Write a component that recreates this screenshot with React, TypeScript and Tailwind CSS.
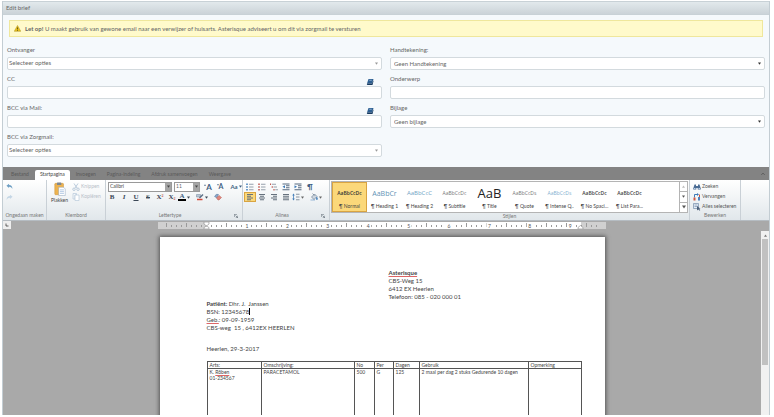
import React from 'react';
import { useState } from 'react';

type IconProps = {
  children: React.ReactNode;
  className?: string;
};

// Shared wrapper for the small toolbar drawings
const Icon = ({ children, className = 'size-2 shrink-0' }: IconProps) => (
  <svg viewBox="0 0 16 16" className={className} fill="none" aria-hidden="true">
    {children}
  </svg>
);

const Caret = ({ className = 'w-1 h-1' }: { className?: string }) => (
  <svg viewBox="0 0 8 8" className={className} aria-hidden="true">
    <path d="M0 1h8L4 7z" fill="currentColor" />
  </svg>
);

const BookIcon = () => (
  <Icon className="size-2">
    <path d="M5 2h10l-3 9H2z" fill="#2d5f92" />
    <path d="M2 11h10l2-6 1 1-2 8H3q-2-1-1-3z" fill="#16395f" />
    <path d="M6.500 4.500h5" stroke="#a9c6e2" strokeWidth="1.500" />
  </Icon>
);

const WarningIcon = () => (
  <Icon className="size-[7px]">
    <path d="M8 1l7.500 13.500H.5z" fill="#e9c21d" stroke="#a88a1c" />
    <path d="M8 5.500v4.500M8 11.500v1.800" stroke="#4a3f10" strokeWidth="1.800" />
  </Icon>
);

const UndoIcon = ({ className }: { className: string }) => (
  <svg viewBox="0 0 16 16" className={className} fill="none" aria-hidden="true">
    <path d="M1 6l6-4.500v3c5 0 8 3 7.500 9-1.500-3.500-4-5-7.500-5v3z" fill="currentColor" />
  </svg>
);

const PasteIcon = () => (
  <svg viewBox="0 0 26 32" className="h-[14px] w-3" aria-hidden="true">
    <rect x="1" y="3" width="20" height="26" rx="2" fill="#edb350" stroke="#c68a2b" />
    <rect x="6" y="1" width="10" height="6" rx="1" fill="#7c8794" />
    <path d="M10 12h11l4 4v15H10z" fill="#fff" stroke="#7f97b5" />
    <path d="M13 18h9M13 22h9M13 26h9" stroke="#8fb0d6" strokeWidth="1.500" />
  </svg>
);

const CutIcon = () => (
  <Icon>
    <path d="M4 1l6 9M12 1L6 10" stroke="#b3c6d8" strokeWidth="1.800" />
    <circle cx="4" cy="12.500" r="2.500" stroke="#b3c6d8" strokeWidth="1.800" />
    <circle cx="12" cy="12.500" r="2.500" stroke="#b3c6d8" strokeWidth="1.800" />
  </Icon>
);

const CopyIcon = () => (
  <Icon>
    <path d="M2 1h7v3H6v8H2z" fill="#f3f7fa" stroke="#b3c6d8" strokeWidth="1.300" />
    <path d="M6 4h8v11H6z" fill="#fff" stroke="#b3c6d8" strokeWidth="1.300" />
  </Icon>
);

const BulletsIcon = ({ color }: { color: string }) => (
  <Icon>
    <path d="M2 1v3M2 6.500v3M2 12v3" stroke={color} strokeWidth="3" />
    <path d="M6 2.500h9M6 8h9M6 13.500h9" stroke="#7d8a98" strokeWidth="1.600" />
  </Icon>
);

const MultiListIcon = () => (
  <Icon>
    <path d="M1 1v3M4.500 6.500v3M8 12v3" stroke="#c0574f" strokeWidth="2.400" />
    <path d="M4 2.500h8M7 8h7M10.500 13.500H16" stroke="#7d8a98" strokeWidth="1.600" />
  </Icon>
);

const IndentIcon = ({ flip }: { flip?: boolean }) => (
  <Icon>
    <path d="M1 2h14M8 5.500h7M8 9.500h7M1 13.500h14" stroke="#566a80" strokeWidth="2.200" />
    <path d={flip ? 'M1 4.500v6L6 7.500z' : 'M6 4.500v6L1 7.500z'} fill="#3d7ab8" />
  </Icon>
);

const AlignIcon = ({ d }: { d: string }) => (
  <Icon>
    <path d={d} stroke="#66717d" strokeWidth="2" />
  </Icon>
);

const SpacingIcon = () => (
  <Icon>
    <path d="M3 1L.5 5h5zM3 15L.5 11h5z" fill="#3d7ab8" />
    <path d="M3 4v8" stroke="#3d7ab8" strokeWidth="1.500" />
    <path d="M8 2.500h7M8 8h7M8 13.500h7" stroke="#7d8a98" strokeWidth="1.800" />
  </Icon>
);

const BucketIcon = () => (
  <Icon>
    <path d="M3 8l6-6 5 5-6 6z" fill="#cfd8e1" stroke="#61758b" strokeWidth="1.300" />
    <path d="M5 1l4 4" stroke="#61758b" strokeWidth="1.300" />
    <path d="M13.500 8q3 5 .5 5.500T13.500 8zM1 14h9" fill="#3d7ab8" stroke="#3d7ab8" />
  </Icon>
);

const MarkerIcon = () => (
  <Icon>
    <path d="M1 3h8v5H1z" fill="#b9c6d4" stroke="#71859b" />
    <path d="M6 9l7-7 2 2-7 7z" fill="#5a6f86" />
    <path d="M2 13h11" stroke="#d44a3a" strokeWidth="3" />
  </Icon>
);

const EraserIcon = () => (
  <Icon>
    <path d="M1 7q4-7 8-4l-3 7z" fill="#8aa6c8" stroke="#5e7da3" />
    <path d="M5 10l5-5 5 4-5 5H8z" fill="#e2877c" stroke="#b65a50" />
  </Icon>
);

const BinocularsIcon = () => (
  <Icon>
    <path d="M3 3h3v3h4V3h3l2.500 8v2h-6v-3h-3v3h-6v-2z" fill="#4b6c94" />
    <path d="M2 11h3M11 11h3" stroke="#b9d0ea" strokeWidth="2" />
  </Icon>
);

const ReplaceIcon = () => (
  <Icon>
    <path d="M3 9V3h6" stroke="#3d7ab8" strokeWidth="2" />
    <path d="M8 0l4 3-4 3z" fill="#3d7ab8" />
    <path d="M1 9h4v6H1z" fill="#d2563f" />
    <path d="M10 8h4v7h-4z" fill="#4f81bd" />
    <path d="M13 3v5" stroke="#d2563f" strokeWidth="2" />
  </Icon>
);

const SelectAllIcon = () => (
  <Icon>
    <path d="M1 1h10v10H1z" fill="#e4ecf5" stroke="#6c86a5" strokeWidth="1.300" />
    <path d="M3 4h6M3 7h6" stroke="#6c86a5" strokeWidth="1.200" />
    <path d="M8 6v9l2.500-2 3 2.500 1-1.500-2.500-2.500h3z" fill="#4b5f78" />
  </Icon>
);

const LauncherIcon = () => (
  <Icon className="size-1">
    <path d="M1 12V1h11" stroke="#55606b" strokeWidth="2.500" />
    <path d="M6 6l8 8M15 7v8H7" stroke="#55606b" strokeWidth="2.500" />
  </Icon>
);

type SelectFieldProps = {
  id: string;
  label: string;
  options: string[];
  boxed?: boolean;
};

const SelectField = ({ id, label, options, boxed }: SelectFieldProps) => (
  <div>
    <label htmlFor={id} className="block h-[13px] leading-3">
      {label}
    </label>
    <div className="grid items-center rounded-xs border border-[#d3dade] bg-white">
      <select
        id={id}
        className={`col-start-1 row-start-1 h-[11px] w-full appearance-none outline-none ${
          boxed ? 'pl-[3px]' : 'px-px pb-[2px]'
        }`}
      >
        {options.map((option) => (
          <option key={option}>{option}</option>
        ))}
      </select>
      <span className={`pointer-events-none col-start-1 row-start-1 justify-self-end pr-[3px] ${boxed ? 'text-[#333]' : 'text-[#999]'}`}>
        <Caret className="size-[3px]" />
      </span>
    </div>
  </div>
);

const TextField = ({ id, label, book }: { id: string; label: string; book?: boolean }) => (
  <div>
    <div className="flex h-[13px] justify-between">
      <label htmlFor={id} className="leading-3">
        {label}
      </label>
      {book && (
        <button type="button" aria-label="Adresboek" className="mr-2 pt-1">
          <BookIcon />
        </button>
      )}
    </div>
    <input
      id={id}
      type="text"
      className="block h-[13px] w-full rounded-xs border border-[#d3dade] bg-white px-1 outline-none"
    />
  </div>
);

type GroupProps = {
  title: string;
  className: string;
  launcher?: boolean;
  children: React.ReactNode;
};

const Group = ({ title, className, launcher, children }: GroupProps) => (
  <section className={`flex flex-col border-r border-[#c9d0d6] ${className}`}>
    <div className="flex-1">{children}</div>
    <div className="flex h-2 items-center text-[#777]">
      <span className="flex-1 text-center">{title}</span>
      {launcher && (
        <button type="button" aria-label={`${title} opties`} className="pr-1">
          <LauncherIcon />
        </button>
      )}
    </div>
  </section>
);

const Tool = ({ label, active, children }: { label: string; active?: boolean; children: React.ReactNode }) => (
  <button
    type="button"
    aria-label={label}
    className={`flex h-[10px] w-3 items-center justify-center ${
      active ? 'border border-[#d9a441] bg-[#fbd87a]' : ''
    }`}
  >
    {children}
  </button>
);

const tabs = ['Bestand', 'Startpagina', 'Invoegen', 'Pagina-indeling', 'Afdruk samenvoegen', 'Weergave'];

const styles = [
  { name: 'Normal', sample: 'AaBbCcDc', look: 'text-[5px] font-semibold text-[#333]' },
  { name: 'Heading 1', sample: 'AaBbCr', look: 'text-[7px] text-[#5f93b5]' },
  { name: 'Heading 2', sample: 'AaBbCcC', look: 'text-[6px] text-[#6fa3c4]' },
  { name: 'Subtitle', sample: 'AaBbCcDc', look: 'text-[5px] text-[#777]' },
  { name: 'Title', sample: 'AaB', look: 'text-[13px] text-[#222]' },
  { name: 'Quote', sample: 'AaBbCcDs', look: 'text-[5px] text-[#777]' },
  { name: 'Intense Q..', sample: 'AaBbCcDs', look: 'text-[5px] text-[#7fb0d0]' },
  { name: 'No Spaci...', sample: 'AaBbCcDc', look: 'text-[5px] font-semibold text-[#444]' },
  { name: 'List Para...', sample: 'AaBbCcDc', look: 'text-[5px] font-semibold text-[#444]' },
];

// Ticks every 5px, a taller one halfway between two numbers
const Ruler = () => (
  <svg viewBox="0 0 448 7" className="h-[7px] w-[448px]" aria-hidden="true">
    <rect width="448" height="7" fill="#d0d0d0" />
    <rect x="48" width="375" height="7" fill="#fff" />
    {Array.from({ length: 87 }, (_, i) => (
      <path key={i} d={`M${8.5 + i * 5} ${i % 4 ? 3 : 1}v${i % 4 ? 2 : 4}`} stroke="#9a9a9a" />
    ))}
    {Array.from({ length: 9 }, (_, i) => (
      <g key={i}>
        <rect x={86 + i * 40.4} y="1" width="6" height="5" fill="#fff" />
        <text x={89 + i * 40.4} y="6" textAnchor="middle" fontSize="5" fill="#555">
          {i + 1}
        </text>
      </g>
    ))}
    <path d="M46 0h5v2l-2.500 2L46 2zM46 7V5.500L48.500 4 51 5.500V7zM420 7V5.500l2.500-2 2.500 2V7z" fill="#fff" stroke="#888" strokeWidth=".6" />
  </svg>
);

const columns = [
  { title: 'Arts:', width: 'w-[54px]' },
  { title: 'Omschrijving:', width: 'w-[93px]' },
  { title: 'No', width: 'w-5' },
  { title: 'Per', width: 'w-[19px]' },
  { title: 'Dagen', width: 'w-[26px]' },
  { title: 'Gebruik', width: 'w-[109px]' },
  { title: 'Opmerking', width: 'w-[53px]' },
];

const spelling = 'underline decoration-[#d66] decoration-1 underline-offset-1';

const Letter = () => (
  <article className="h-[620px] w-[445px] shrink-0 bg-white pt-8 pl-[47px] text-[6px] leading-2 text-[#444] shadow-[0_0_4px_1px_#555]">
    <address className="pl-[182px] not-italic">
      <b className={spelling}>Asterisque</b>
      <br />
      CBS-Weg 15
      <br />
      6412 EX Heerlen
      <br />
      Telefoon: 085 - 020 000 01
    </address>
    <p className="-mt-px">
      <b>Patiënt:</b> Dhr. J.&nbsp; Janssen
      <br />
      BSN: <span className="border-r border-black">12345678</span>
      <br />
      <span className={spelling}>Geb.</span>: 09-09-1959
      <br />
      CBS-weg&nbsp; 15 , 6412EX HEERLEN
    </p>
    <p className="pt-[13px]">Heerlen, 29-3-2017</p>
    <table className="mt-2 w-[374px] table-fixed border-collapse text-left text-[5px] leading-[6px]">
      <thead>
        <tr>
          {columns.map((column) => (
            <th key={column.title} className={`border border-[#555] pl-[2px] font-normal ${column.width}`}>
              {column.title}
            </th>
          ))}
        </tr>
      </thead>
      <tbody>
        <tr className="h-40 align-top">
          <td className="border border-[#555] pl-[2px]">
            K. <span className={spelling}>Rõben</span>
            <br />
            01-234567
          </td>
          <td className="border border-[#555] pl-[2px]">PARACETAMOL</td>
          <td className="border border-[#555] pl-[2px]">500</td>
          <td className="border border-[#555] pl-[2px]">G</td>
          <td className="border border-[#555] pl-[2px]">125</td>
          <td className="border border-[#555] pl-[2px]">2 maal per dag 2 stuks Gedurende 10 dagen</td>
          <td className="border border-[#555] pl-[2px]" />
        </tr>
      </tbody>
    </table>
  </article>
);

const App = () => {
  const [activeTab, setActiveTab] = useState('Startpagina');
  const [activeStyle, setActiveStyle] = useState('Normal');

  return (
    <div className="flex h-screen flex-col overflow-hidden bg-white pt-px pr-1 pb-[2px] pl-[2px] font-['Lato',sans-serif] text-[6px] text-[#666]">
      <main className="flex min-h-0 flex-1 flex-col border-x border-[#c3cdd3] bg-[#f5f9fc]">
        <h1 className="h-[14px] border-y border-[#c8d1d6] bg-linear-to-b from-[#e2e9ec] to-[#cbd3d8] pl-[3px] leading-3">
          Edit brief
        </h1>

        {/* Warning */}
        <div className="mx-[6px] mt-[5px] flex h-[17px] items-center gap-1 border border-[#efe79c] bg-[#fffacb] pl-1">
          <WarningIcon />
          <p>
            <b>Let op!</b> U maakt gebruik van gewone email naar een verwijzer of huisarts. Asterisque adviseert u om dit
            via zorgmail te versturen
          </p>
        </div>

        {/* Mail fields */}
        <form className="grid grid-cols-2 gap-x-2 px-1 pt-[7px] pb-[10px]">
          <div className="flex flex-col gap-[3px]">
            <SelectField id="receiver" label="Ontvanger" options={['Selecteer opties']} />
            <TextField id="cc" label="CC" book />
            <TextField id="bcc" label="BCC via Mail:" book />
            <SelectField id="bcc-zorgmail" label="BCC via Zorgmail:" options={['Selecteer opties']} />
          </div>
          <div className="flex flex-col gap-[3px]">
            <SelectField id="signature" label="Handtekening:" options={['Geen Handtekening']} boxed />
            <TextField id="subject" label="Onderwerp" />
            <SelectField id="attachment" label="Bijlage" options={['Geen bijlage']} boxed />
          </div>
        </form>

        {/* Ribbon tabs */}
        <nav className="flex h-[13px] shrink-0 items-end gap-px bg-[#838383] pl-[3px] text-[5px]">
          {tabs.map((tab) => (
            <button
              key={tab}
              type="button"
              onClick={() => setActiveTab(tab)}
              className={`h-[10px] px-[5px] ${
                tab === activeTab ? 'rounded-t-xs bg-white text-[#444]' : 'text-[#5a5a5a]'
              }`}
            >
              {tab}
            </button>
          ))}
          <button type="button" aria-label="Lint verbergen" className="mr-1 mb-1 ml-auto">
            <Icon className="size-1">
              <path d="M1 12l7-8 7 8" stroke="#555" strokeWidth="3" />
            </Icon>
          </button>
        </nav>

        {/* Ribbon */}
        <div className="flex h-[41px] shrink-0 border-b border-[#b5bcc2] bg-linear-to-b from-white to-[#e1e7eb] text-[5px] whitespace-nowrap">
          <Group title="Ongedaan maken" className="w-11">
            <div className="flex flex-col items-start gap-1 pt-[3px] pl-[3px]">
              <button type="button" aria-label="Ongedaan maken">
                <UndoIcon className="size-[7px] text-[#6f9fc4]" />
              </button>
              <button type="button" aria-label="Opnieuw">
                <UndoIcon className="size-[7px] -scale-x-100 text-[#c4d6e5]" />
              </button>
            </div>
          </Group>

          <Group title="Klembord" className="w-[59px]">
            <div className="flex gap-1 pt-[2px] pl-1">
              <button type="button" className="flex flex-col items-center gap-px text-[#444]">
                <PasteIcon />
                Plakken
              </button>
              <div className="flex flex-col text-[#b8c0c8]">
                <button type="button" disabled className="flex h-[10px] items-center gap-px">
                  <CutIcon />
                  Knippen
                </button>
                <button type="button" disabled className="flex h-[10px] items-center gap-px">
                  <CopyIcon />
                  Kopiëren
                </button>
              </div>
            </div>
          </Group>

          <Group title="Lettertype" className="w-[137px]" launcher>
            <div className="flex h-3 items-center gap-[2px] pt-px pl-[2px]">
              <div className="grid w-16 items-center border border-[#999] bg-white">
                <select aria-label="Lettertype" className="col-start-1 row-start-1 h-2 appearance-none pl-px text-[#444] outline-none">
                  <option>Calibri</option>
                </select>
                <span className="pointer-events-none col-start-1 row-start-1 flex h-2 w-[6px] items-center justify-center justify-self-end bg-[#a5a5a5] text-[#444]">
                  <Caret className="size-[3px]" />
                </span>
              </div>
              <div className="grid w-[26px] items-center border border-[#999] bg-white">
                <select aria-label="Tekengrootte" className="col-start-1 row-start-1 h-2 appearance-none pl-px text-[#666] outline-none">
                  <option>11</option>
                </select>
                <span className="pointer-events-none col-start-1 row-start-1 flex h-2 w-[6px] items-center justify-center justify-self-end bg-[#a5a5a5] text-[#444]">
                  <Caret className="size-[3px]" />
                </span>
              </div>
              <div className="flex text-[8px] font-bold text-[#3f5f82]">
                <Tool label="Groter">
                  <Caret className="mb-1 size-[2px] rotate-180" />A
                </Tool>
                <Tool label="Kleiner">
                  <Caret className="mb-1 size-[2px]" />
                  <span className="text-[7px]">A</span>
                </Tool>
                <span className="pl-1">
                  <Tool label="Hoofdlettergebruik">
                    <span className="text-[6px]">Aa</span>
                    <Caret className="ml-px size-[3px] shrink-0" />
                  </Tool>
                </span>
              </div>
            </div>
            <div className="flex h-[10px] font-['Liberation_Serif',serif] text-[7px] font-bold text-[#3c4856]">
              <Tool label="Vet">B</Tool>
              <Tool label="Cursief">
                <i>I</i>
              </Tool>
              <Tool label="Onderstrepen">
                <u>U</u>
              </Tool>
              <Tool label="Doorhalen">
                <s>S</s>
              </Tool>
              <Tool label="Superscript">
                <span>
                  X<sup className="text-[4px] text-[#c0574f]">2</sup>
                </span>
              </Tool>
              <Tool label="Subscript">
                <span>
                  X<sub className="text-[4px] text-[#c0574f]">2</sub>
                </span>
              </Tool>
              <Tool label="Tekstkleur">
                <span className="border-b-2 border-black px-px leading-[6px] text-[#3f5f82]">A</span>
                <Caret className="ml-px size-[3px] shrink-0" />
              </Tool>
              <div className="flex gap-1 pl-[6px]">
                <Tool label="Markeren">
                  <MarkerIcon />
                  <Caret className="ml-px size-[3px] shrink-0" />
                </Tool>
                <Tool label="Opmaak wissen">
                  <EraserIcon />
                </Tool>
              </div>
            </div>
          </Group>

          <Group title="Alinea" className="w-[87px]" launcher>
            <div className="flex h-3 items-center pt-px pl-px">
              <Tool label="Opsommingstekens">
                <BulletsIcon color="#3d7ab8" />
              </Tool>
              <Tool label="Nummering">
                <BulletsIcon color="#c0574f" />
              </Tool>
              <Tool label="Lijst met meerdere niveaus">
                <MultiListIcon />
              </Tool>
              <Tool label="Inspringing verkleinen">
                <IndentIcon />
              </Tool>
              <Tool label="Inspringing vergroten">
                <IndentIcon flip />
              </Tool>
              <Tool label="Alineamarkeringen">
                <span className="text-[8px] font-bold text-[#3f5f82]">¶</span>
              </Tool>
            </div>
            <div className="flex pl-px">
              <Tool label="Links uitlijnen" active>
                <AlignIcon d="M2 3h12M2 6.500h8M2 10h12M2 13.500h8" />
              </Tool>
              <Tool label="Centreren">
                <AlignIcon d="M2 3h12M4 6.500h8M2 10h12M4 13.500h8" />
              </Tool>
              <Tool label="Rechts uitlijnen">
                <AlignIcon d="M2 3h12M6 6.500h8M2 10h12M6 13.500h8" />
              </Tool>
              <Tool label="Uitvullen">
                <AlignIcon d="M2 3h12M2 6.500h12M2 10h12M2 13.500h12" />
              </Tool>
              <Tool label="Regelafstand">
                <SpacingIcon />
                <Caret className="ml-px size-[3px] shrink-0" />
              </Tool>
              <div className="pl-[6px]">
                <Tool label="Arcering">
                  <BucketIcon />
                  <Caret className="ml-px size-[3px] shrink-0" />
                </Tool>
              </div>
            </div>
          </Group>

          <Group title="Stijlen" className="min-w-0 flex-1">
            <div className="mx-px mt-px flex h-8 border border-[#b4b4b4] bg-white">
              {styles.map((style) => (
                <button
                  key={style.name}
                  type="button"
                  onClick={() => setActiveStyle(style.name)}
                  className={`flex w-[35px] shrink-0 flex-col items-center ${
                    style.name === activeStyle ? 'border border-[#d9a441] bg-[#fbd87a]' : 'border border-transparent'
                  }`}
                >
                  <span className={`flex h-5 items-center font-['Open_Sans',sans-serif] leading-none ${style.look}`}>
                    {style.sample}
                  </span>
                  <span className="leading-[7px] text-[#444]">¶ {style.name}</span>
                </button>
              ))}
              <div className="ml-auto flex w-2 flex-col divide-y divide-[#b4b4b4] border-l border-[#b4b4b4] text-[#555]">
                <button type="button" aria-label="Vorige" className="flex flex-1 items-center justify-center text-[#bbb]">
                  <Caret className="size-[3px] rotate-180" />
                </button>
                <button type="button" aria-label="Volgende" className="flex flex-1 items-center justify-center">
                  <Caret className="size-[3px]" />
                </button>
                <button type="button" aria-label="Meer" className="flex flex-1 items-center justify-center">
                  <Caret className="size-1" />
                </button>
              </div>
            </div>
          </Group>

          <Group title="Bewerken" className="w-[51px]">
            <div className="flex flex-col items-start pt-[2px] pl-[3px] text-[#555]">
              <button type="button" className="flex h-[10px] items-center gap-px">
                <BinocularsIcon />
                Zoeken
              </button>
              <button type="button" className="flex h-[10px] items-center gap-px">
                <ReplaceIcon />
                Vervangen
              </button>
              <button type="button" className="flex h-[10px] items-center gap-px">
                <SelectAllIcon />
                Alles selecteren
              </button>
            </div>
          </Group>
          <div className="w-7" />
        </div>

        {/* Document */}
        <div className="flex min-h-0 flex-1 flex-col bg-[#a9a9a9]">
          <div className="flex h-2 shrink-0 items-center pr-4">
            <button type="button" aria-label="Tabstop" className="flex size-2 items-center justify-center bg-[#eee]">
              <Icon className="size-1">
                <path d="M4 2v10h10" stroke="#333" strokeWidth="3" />
              </Icon>
            </button>
            <div className="flex flex-1 justify-center">
              <Ruler />
            </div>
          </div>
          <div className="flex min-h-0 flex-1">
            <div className="flex flex-1 justify-center overflow-hidden pt-2">
              <Letter />
            </div>
            <div className="mt-[2px] flex w-2 flex-col items-center bg-[#f1f1f1]">
              <span className="flex h-2 items-center text-[#777]">
                <Caret className="size-[3px] rotate-180" />
              </span>
              <div className="h-[126px] w-[6px] bg-[#c1c1c1]" />
            </div>
          </div>
        </div>
      </main>
    </div>
  );
};

export default App;
